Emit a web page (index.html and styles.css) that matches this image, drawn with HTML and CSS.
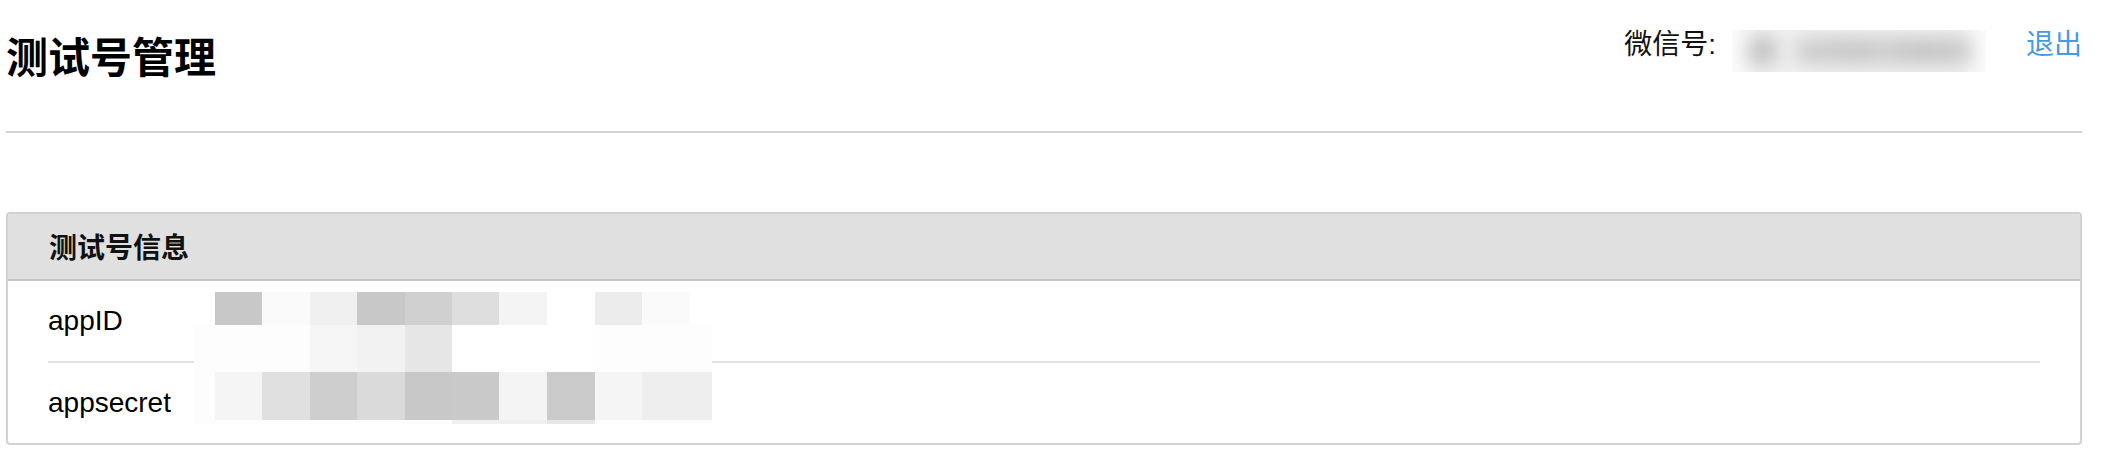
FILE: index.html
```html
<!DOCTYPE html>
<html lang="zh-CN">
<head>
<meta charset="utf-8">
<title>测试号管理</title>
<link rel="stylesheet" href="styles.css">
</head>
<body>
<div class="page">
  <header class="topbar">
    <h1 class="title">测试号管理</h1>
    <div class="account">
      <span class="account-label">微信号:</span>
      <span class="account-id" aria-label="已隐藏">
        <span class="blob blob-dot"></span>
        <span class="blob blob-bar"></span>
      </span>
      <a class="logout" href="#">退出</a>
    </div>
  </header>

  <section class="panel">
    <div class="panel-head">测试号信息</div>
    <div class="panel-body">
      <div class="row row-first">appID</div>
      <div class="row">appsecret</div>
      <svg class="mosaic" width="518" height="132" viewBox="0 0 518 132" aria-hidden="true">
        <!-- row 1 -->
        <rect x="21" y="0" width="47" height="33" fill="#c8c8c8"/>
        <rect x="68" y="0" width="48" height="33" fill="#fafafa"/>
        <rect x="116" y="0" width="47" height="33" fill="#f0f0f0"/>
        <rect x="163" y="0" width="48" height="33" fill="#c8c8c8"/>
        <rect x="211" y="0" width="47" height="33" fill="#d0d0d0"/>
        <rect x="258" y="0" width="47" height="33" fill="#dedede"/>
        <rect x="305" y="0" width="48" height="33" fill="#f4f4f4"/>
        <rect x="401" y="0" width="47" height="33" fill="#ececec"/>
        <rect x="448" y="0" width="48" height="33" fill="#fafafa"/>
        <!-- row 2 -->
        <rect x="0" y="33" width="518" height="47" fill="#fdfdfd"/>
        <rect x="116" y="33" width="47" height="47" fill="#f6f6f6"/>
        <rect x="163" y="33" width="48" height="47" fill="#f2f2f2"/>
        <rect x="211" y="33" width="47" height="47" fill="#e6e6e6"/>
        <rect x="258" y="33" width="143" height="47" fill="#ffffff"/>
        <!-- row 3 -->
        <rect x="0" y="80" width="518" height="48" fill="#fdfdfd"/>
        <rect x="21" y="80" width="47" height="48" fill="#f5f5f5"/>
        <rect x="68" y="80" width="48" height="48" fill="#e0e0e0"/>
        <rect x="116" y="80" width="47" height="48" fill="#cecece"/>
        <rect x="163" y="80" width="48" height="48" fill="#dadada"/>
        <rect x="211" y="80" width="47" height="48" fill="#c8c8c8"/>
        <rect x="258" y="80" width="47" height="48" fill="#c9c9c9"/>
        <rect x="305" y="80" width="48" height="48" fill="#f4f4f4"/>
        <rect x="353" y="80" width="48" height="48" fill="#cbcbcb"/>
        <rect x="401" y="80" width="47" height="48" fill="#f5f5f5"/>
        <rect x="448" y="80" width="70" height="48" fill="#eeeeee"/>
        <!-- row 4 -->
        <rect x="0" y="128" width="518" height="4" fill="#fdfdfd"/>
        <rect x="258" y="128" width="47" height="4" fill="#f0f0f0"/>
        <rect x="305" y="128" width="48" height="4" fill="#efefef"/>
        <rect x="353" y="128" width="48" height="4" fill="#e6e6e6"/>
      </svg>
    </div>
  </section>
</div>
</body>
</html>
```

FILE: styles.css
```css
html, body {
  margin: 0;
  padding: 0;
  background: #ffffff;
}

body {
  font-family: "Liberation Sans", "Noto Sans CJK SC", sans-serif;
  color: #000000;
}

.page {
  margin-left: 6px;
  width: 2076px;
}

.topbar {
  display: flex;
  justify-content: space-between;
  align-items: flex-start;
  height: 131px;
  border-bottom: 2px solid #d4d4d4;
}

.title {
  margin: 27px 0 0 0;
  font-family: "Noto Sans CJK SC", sans-serif;
  font-size: 42px;
  line-height: 56px;
  font-weight: 700;
  color: #000000;
}

.account {
  display: flex;
  align-items: flex-start;
  padding-top: 24px;
  font-family: "Liberation Sans", "Noto Sans CJK SC", sans-serif;
  font-size: 28px;
  line-height: 42px;
}

.account-label {
  color: #111111;
}

.account-id {
  position: relative;
  display: block;
  width: 254px;
  height: 42px;
  margin: 6px 0 0 16px;
  background: linear-gradient(to right, #fbfbfb, #f0f0f0 10%, #f0f0f0 90%, #fbfbfb);
  overflow: hidden;
}

.blob {
  position: absolute;
  filter: blur(9px);
}

.blob-dot {
  left: 16px;
  top: 6px;
  width: 30px;
  height: 30px;
  border-radius: 50%;
  background: #c2c2c2;
}

.blob-bar {
  left: 62px;
  top: 8px;
  width: 178px;
  height: 26px;
  border-radius: 13px;
  background: linear-gradient(to right, #cfcfcf, #c6c6c6 35%, #cdcdcd 50%, #c4c4c4 70%, #cacaca);
}

.logout {
  margin-left: 40px;
  color: #459ae6;
  text-decoration: none;
}

.panel {
  position: relative;
  margin-top: 79px;
  border: 2px solid #d2d2d2;
  border-radius: 4px;
  overflow: hidden;
}

.panel-head {
  height: 65px;
  line-height: 65px;
  padding-left: 41px;
  background: #e0e0e0;
  border-bottom: 2px solid #c6c6c6;
  font-family: "Noto Sans CJK SC", sans-serif;
  font-size: 28px;
  font-weight: 700;
  color: #111111;
}

.panel-body {
  position: relative;
}

.row {
  margin: 0 40px;
  height: 80px;
  line-height: 80px;
  font-size: 28px;
  color: #000000;
}

.row-first {
  border-bottom: 2px solid #e4e4e4;
}

.mosaic {
  position: absolute;
  left: 186px;
  top: 11px;
  display: block;
}
```
